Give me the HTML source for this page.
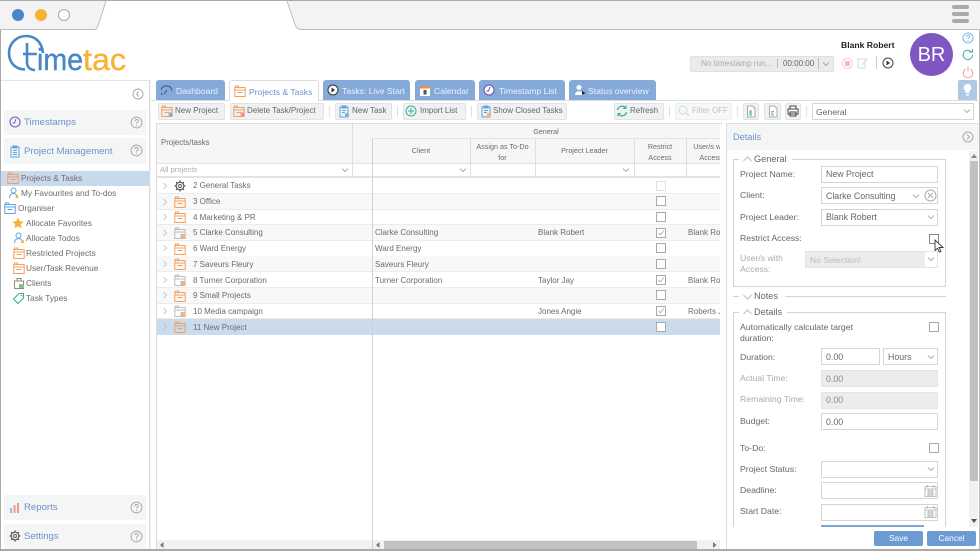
<!DOCTYPE html>
<html><head><meta charset="utf-8"><title>TimeTac</title>
<style>
html,body{margin:0;padding:0;background:#fff;width:980px;height:551px;overflow:hidden}
#w{position:relative;width:980px;height:551px;overflow:hidden;font-family:"Liberation Sans",sans-serif;color:#666;filter:blur(.35px)}
#w div,#w span,#w svg{position:absolute;box-sizing:border-box}
.t{white-space:nowrap;height:16px;line-height:16px;font-size:8px}
.tab{top:80px;height:20px;background:#85aad9;border-radius:3px 3px 0 0}
.tl{top:83px;color:#eaf1fa;font-size:8.6px}
.btn{top:103px;height:17px;background:#f0f1f1;border:1px solid #e2e3e3;border-radius:2px}
.bl{top:103px;font-size:8px;color:#666}
.nav{left:4px;width:142px;background:#f4f5f5}
.navt{left:24px;font-size:9.6px;color:#6f8fcb}
.li{font-size:8.3px;color:#6b6b6b}
.row{left:157px;width:563px;height:16px;border-bottom:1px solid #ececec}
.cb{width:10px;height:10px;background:#fff;border:1px solid #a9a9a9}
.h{background:#e3e3e3}
.v{background:#dedede}
.ct{font-size:8px;color:#6b6b6b}
.hd{font-size:7.2px;color:#6b6b6b;text-align:center;line-height:11px;white-space:nowrap;height:auto}
.lb{left:740px;font-size:8.7px;color:#666}
.ds{color:#aaa}
.in{left:821px;width:117px;height:17px;background:#fff;border:1px solid #d5d5d5}
.it{left:826px;font-size:8.8px;color:#666}
.dis{background:#ececec;border-color:#e4e4e4}
.fs{left:733px;width:213px;border:1px solid #d4d4d4}
.leg{background:#fff;height:12px}
.ic{overflow:visible}
</style></head><body><div id="w">

<svg width="0" height="0" style="position:absolute">
<symbol id="fo" viewBox="0 0 12 12"><path d="M1.500 3V1h3v1.500M.8 2.500h10.400v9H.8zM.8 5h10.400M3.500 7.500h5" fill="none" stroke="#f4a05c" stroke-width="1"/></symbol>
<symbol id="fg" viewBox="0 0 12 12"><path d="M1.500 3V1h3v1.500M.8 2.500h10.400v9H.8zM.8 5h10.400" fill="none" stroke="#bdbdbd" stroke-width="1"/><rect x="6.500" y="7" width="4.500" height="4.500" fill="#f4b27c"/></symbol>
<symbol id="gear" viewBox="0 0 12 12"><circle cx="6" cy="6" r="3.800" fill="none" stroke="#555" stroke-width="1.100"/><circle cx="6" cy="6" r="1.500" fill="none" stroke="#555" stroke-width=".9"/><path d="M6 .5v1.800M6 9.700v1.800M.5 6h1.800M9.700 6h1.800M2.100 2.100l1.300 1.300M8.600 8.600l1.300 1.300M2.100 9.900l1.300-1.300M8.600 3.400l1.300-1.300" stroke="#555" stroke-width="1.300"/></symbol>
<symbol id="q" viewBox="0 0 12 12"><circle cx="6" cy="6" r="5" fill="none" stroke="#aaa" stroke-width=".9"/><path d="M4.500 4.700c0-2 3.200-2 3.200-.1 0 1.200-1.700 1.200-1.700 2.600M6 8.200v1" fill="none" stroke="#aaa" stroke-width=".9"/></symbol>
<symbol id="ch" viewBox="0 0 8 6"><path d="M1 1.500l3 3 3-3" fill="none" stroke="#999" stroke-width=".8"/></symbol>
<symbol id="cr" viewBox="0 0 6 8"><path d="M1.500 1l3 3-3 3" fill="none" stroke="#bbb" stroke-width=".8"/></symbol>
<symbol id="cal" viewBox="0 0 13 13"><path d="M1 2.500h11v10H1zM1 5h11M3.500 1v2.500M9.500 1v2.500M3 7h7M3 9h7M3 11h7M5 5v7M8 5v7" fill="none" stroke="#b0b0b0" stroke-width=".8"/></symbol>
<symbol id="tick" viewBox="0 0 10 10"><path d="M2 5l2.300 2.300L8.500 1.800" fill="none" stroke="#999" stroke-width=".9"/></symbol>
</svg>

<!-- browser chrome -->
<div style="left:0;top:0;width:980px;height:30px;background:#f3f3f3;border-top:1px solid #aaa;border-bottom:1px solid #bdbdbd"></div>
<svg style="left:90px;top:0" width="220" height="31"><path d="M0 30h3c3 0 4-1 5-4L16 1H197l8 24c1 3 3 5 7 5h8v1H0z" fill="#fff"/><path d="M0 29.500h3c3 0 4-1 5-4L16 1M197 1l8 23.500c1 3 3 5 7 5h8" fill="none" stroke="#bbb"/></svg>
<div style="left:12px;top:9px;width:12px;height:12px;border-radius:50%;background:#4a86c8"></div>
<div style="left:35px;top:9px;width:12px;height:12px;border-radius:50%;background:#f5b335"></div>
<div style="left:58px;top:9px;width:12px;height:12px;border-radius:50%;background:#fff;border:1px solid #aaa"></div>
<div style="left:952px;top:5px;width:17px;height:4px;background:#aaa;border-radius:2px"></div>
<div style="left:952px;top:12px;width:17px;height:4px;background:#aaa;border-radius:2px"></div>
<div style="left:952px;top:19px;width:17px;height:4px;background:#aaa;border-radius:2px"></div>
<div style="left:0;top:30px;width:1px;height:521px;background:#aaa"></div>
<div style="left:979px;top:30px;width:1px;height:521px;background:#bbb"></div>
<div style="left:0;top:549px;width:980px;height:2px;background:#aaa"></div>

<!-- logo -->
<svg style="left:5px;top:32px" width="125" height="44">
<path d="M20 37.500C10 37.500 4 30 4 21 4 11 12 4 21 4c9 0 16 6 17 17" fill="none" stroke="#4a86c8" stroke-width="2.600"/>
<path d="M22 11v19c0 5 3 8 8 8M18 22h14" fill="none" stroke="#4a86c8" stroke-width="2.600"/>
<text x="32" y="38" font-family="Liberation Sans" font-size="31" textLength="46" lengthAdjust="spacingAndGlyphs" fill="#4a86c8" stroke="#4a86c8" stroke-width=".4">ime</text>
<text x="78" y="38" font-family="Liberation Sans" font-size="31" textLength="43" lengthAdjust="spacingAndGlyphs" fill="#f8b133" stroke="#f8b133" stroke-width=".4">tac</text>
</svg>

<!-- timer and user -->
<div style="left:690px;top:56px;width:144px;height:16px;background:#ebebeb;border:1px solid #e0e0e0;border-radius:2px"></div>
<div class="t ds" style="left:701px;top:56px;font-size:8.200px">No timestamp run...</div>
<div style="left:777px;top:59px;width:1px;height:9px;background:#bbb"></div>
<div class="t" style="left:783px;top:56px;font-size:8px;color:#666">00:00:00</div>
<div style="left:818px;top:58px;width:1px;height:11px;background:#bbb"></div>
<svg class="ic" style="left:822px;top:61px" width="8" height="6"><use href="#ch"/></svg>
<svg style="left:841px;top:57px" width="13" height="13"><circle cx="6.500" cy="6.500" r="5" fill="none" stroke="#f9caca"/><rect x="4" y="4" width="5" height="5" fill="#f7baba"/></svg>
<svg style="left:856px;top:56px" width="13" height="14"><path d="M2 3h7v9H2z" fill="none" stroke="#c7ddf0"/><path d="M6 8l5-6 1 1-5 6z" fill="#f9dfae"/></svg>
<div style="left:876px;top:56px;width:1px;height:13px;background:#ccc"></div>
<svg style="left:882px;top:57px" width="12" height="12"><circle cx="6" cy="6" r="5" fill="none" stroke="#444"/><path d="M4.500 3.500l3.500 2.500-3.500 2.500z" fill="#333"/></svg>
<div class="t" style="left:841px;top:37px;font-size:8.600px;font-weight:bold;color:#222">Blank Robert</div>
<div style="left:910px;top:33px;width:43px;height:43px;border-radius:50%;background:#7e57c2"></div>
<div class="t" style="left:910px;top:47px;width:43px;text-align:center;font-size:20px;color:#fff">BR</div>
<svg style="left:962px;top:32px" width="12" height="12"><circle cx="6" cy="6" r="5" fill="none" stroke="#7db7e8"/><path d="M4.500 4.700c0-2 3.200-2 3.200-.1 0 1.200-1.700 1.200-1.700 2.600M6 8.200v1" fill="none" stroke="#7db7e8"/></svg>
<svg style="left:962px;top:49px" width="12" height="12"><path d="M10.500 6a4.700 4.700 0 1 1-1.500-3.500" fill="none" stroke="#3fae9b" stroke-width="1"/><path d="M7 3h3.500V0" fill="none" stroke="#3fae9b"/></svg>
<svg style="left:962px;top:66px" width="12" height="12"><path d="M3.500 3a4.700 4.700 0 1 0 5 0M6 .5v5" fill="none" stroke="#f29a9a" stroke-width="1"/></svg>
<div style="left:958px;top:80px;width:19px;height:20px;background:#aec8e6;border-radius:2px 2px 0 0"></div>
<svg style="left:962px;top:83px" width="11" height="14"><path d="M5.500 1a3.800 3.800 0 0 1 2 7v2h-4V8a3.800 3.800 0 0 1 2-7zM4 11h3v1.500H4z" fill="#fff"/></svg>

<!-- sidebar -->
<div style="left:1px;top:80px;width:149px;height:469px;background:#fff;border-top:1px solid #e4e4e4;border-right:1px solid #dcdcdc"></div>
<div style="left:150px;top:80px;width:1px;height:469px;background:#f2f2f2"></div>
<svg style="left:132px;top:88px" width="12" height="12"><circle cx="6" cy="6" r="5" fill="none" stroke="#aaa"/><path d="M7 3.500L4.500 6 7 8.500" fill="none" stroke="#aaa"/></svg>
<div class="nav" style="top:110px;height:25px"></div>
<svg style="left:9px;top:116px" width="12" height="12"><circle cx="6" cy="6" r="5" fill="none" stroke="#7e57c2" stroke-width="1.100"/><path d="M7 3L5.500 7H3.500" fill="none" stroke="#7e57c2"/></svg>
<div class="t navt" style="top:115px">Timestamps</div>
<svg style="left:130px;top:116px" width="13" height="13"><use href="#q"/></svg>
<div class="nav" style="top:138px;height:26px"></div>
<svg style="left:9px;top:145px" width="12" height="13"><path d="M2 2h8v10H2zM4 1h4v2H4zM4 5.500h4M4 7.500h4M4 9.500h4" fill="none" stroke="#5fa4dc"/></svg>
<div class="t navt" style="top:144px">Project Management</div>
<svg style="left:130px;top:144px" width="13" height="13"><use href="#q"/></svg>

<div style="left:1px;top:171px;width:148px;height:15px;background:#c9d9ec"></div>
<svg style="left:7px;top:172px" width="12" height="12"><use href="#fo"/></svg>
<div class="t li" style="left:21px;top:170px">Projects &amp; Tasks</div>
<svg style="left:8px;top:187px" width="12" height="12"><circle cx="5.500" cy="3.500" r="2.500" fill="none" stroke="#5fa4dc"/><path d="M1.500 11c0-6 8-6 8 0" fill="none" stroke="#5fa4dc"/><path d="M9 7.500l1 1.500h1.500L10 10l.5 1.500L9 11l-1.500.5L8 10 7 9h1z" fill="#f5b335"/></svg>
<div class="t li" style="left:21px;top:185px">My Favourites and To-dos</div>
<svg style="left:4px;top:202px" width="12" height="12"><path d="M1.500 3V1h3v1.500M.8 2.500h10.400v9H.8zM.8 5h10.400M3.500 7.500h5" fill="none" stroke="#5fa4dc"/></svg>
<div class="t li" style="left:18px;top:200px">Organiser</div>
<svg style="left:12px;top:217px" width="12" height="12"><path d="M6 .5l1.700 3.700 4 .4-3 2.700.9 4L6 9.300 2.400 11.300l.9-4-3-2.700 4-.4z" fill="#f5b335"/></svg>
<div class="t li" style="left:26px;top:215px">Allocate Favorites</div>
<svg style="left:13px;top:232px" width="12" height="12"><circle cx="5.500" cy="3.500" r="2.500" fill="none" stroke="#5fa4dc"/><path d="M1.500 11c0-6 8-6 8 0" fill="none" stroke="#5fa4dc"/><path d="M8 8l3 3M11 8l-3 3" stroke="#f5b335"/></svg>
<div class="t li" style="left:26px;top:230px">Allocate Todos</div>
<svg style="left:13px;top:247px" width="12" height="12"><use href="#fo"/></svg>
<div class="t li" style="left:26px;top:245px">Restricted Projects</div>
<svg style="left:13px;top:262px" width="12" height="12"><use href="#fo"/></svg>
<div class="t li" style="left:26px;top:260px">User/Task Revenue</div>
<svg style="left:13px;top:277px" width="12" height="12"><path d="M1.500 4h9v7.500h-9zM4 4V1.500h4V4" fill="none" stroke="#9a8a7a"/><rect x="6" y="7" width="5" height="4" fill="#8dbf8d"/></svg>
<div class="t li" style="left:26px;top:275px">Clients</div>
<svg style="left:13px;top:292px" width="12" height="12"><path d="M.5 7L6 1.500h4.500V6L5 11.500z" fill="none" stroke="#3fae9b" stroke-width="1.100"/><circle cx="8.500" cy="3.500" r=".9" fill="#3fae9b"/></svg>
<div class="t li" style="left:26px;top:290px">Task Types</div>

<div class="nav" style="top:495px;height:25px"></div>
<svg style="left:9px;top:502px" width="12" height="12"><path d="M1 6h2v5H1z" fill="#8fc1ea"/><path d="M4.500 3h2v8h-2z" fill="#f59a8e"/><path d="M8 1h2v10H8z" fill="#f59a8e"/></svg>
<div class="t navt" style="top:500px">Reports</div>
<svg style="left:130px;top:501px" width="13" height="13"><use href="#q"/></svg>
<div class="nav" style="top:524px;height:25px"></div>
<svg style="left:9px;top:530px" width="12" height="12"><use href="#gear"/></svg>
<div class="t navt" style="top:529px">Settings</div>
<svg style="left:130px;top:530px" width="13" height="13"><use href="#q"/></svg>

<!-- tabs -->
<div class="tab" style="left:156px;width:69px"></div>
<svg style="left:161px;top:84px" width="12" height="12"><path d="M1 11a5.500 5.500 0 0 1 5-9c3 0 5 2.500 5 5M3 10l3-4" fill="none" stroke="#38506e"/></svg>
<div class="t tl" style="left:176px">Dashboard</div>
<div style="left:229px;top:80px;width:90px;height:21px;background:#fff;border:1px solid #dcdcdc;border-bottom:none;border-radius:3px 3px 0 0"></div>
<svg style="left:234px;top:85px" width="12" height="12"><use href="#fo"/></svg>
<div class="t tl" style="left:249px;top:84px;color:#6f8fcb">Projects &amp; Tasks</div>
<div class="tab" style="left:323px;width:87px"></div>
<svg style="left:327px;top:84px" width="12" height="12"><circle cx="6" cy="6" r="5" fill="#fff" stroke="#333"/><path d="M4.500 3.500l3.500 2.500-3.500 2.500z" fill="#333"/></svg>
<div class="t tl" style="left:342px">Tasks: Live Start</div>
<div class="tab" style="left:415px;width:60px"></div>
<svg style="left:419px;top:85px" width="12" height="12"><rect x="1" y="1" width="10" height="10" fill="#fff"/><rect x="1" y="1" width="10" height="2.500" fill="#f08a4b"/><rect x="4.500" y="5" width="3" height="4.500" fill="#555"/></svg>
<div class="t tl" style="left:434px">Calendar</div>
<div class="tab" style="left:479px;width:86px"></div>
<svg style="left:483px;top:84px" width="12" height="12"><circle cx="6" cy="6" r="5" fill="#fff" stroke="#6a4fb0"/><path d="M7 3L5.500 7H3.500" fill="none" stroke="#6a4fb0"/></svg>
<div class="t tl" style="left:499px">Timestamp List</div>
<div class="tab" style="left:569px;width:87px"></div>
<svg style="left:574px;top:84px" width="12" height="13"><circle cx="5" cy="3.500" r="2.500" fill="#fff"/><path d="M1 11c0-5 8-5 8 0z" fill="#fff"/><path d="M8 7l3.500 2L8 11z" fill="#222"/></svg>
<div class="t tl" style="left:588px">Status overview</div>
<div style="left:151px;top:100px;width:78px;height:1px;background:#dcdcdc"></div>
<div style="left:319px;top:100px;width:661px;height:1px;background:#dcdcdc"></div>

<!-- toolbar -->
<div class="btn" style="left:158px;width:67px"></div>
<svg style="left:161px;top:105px" width="12" height="12"><use href="#fo"/><circle cx="9.500" cy="9.500" r="2" fill="#67bdc2"/></svg>
<div class="t bl" style="left:175px">New Project</div>
<div class="btn" style="left:230px;width:94px"></div>
<svg style="left:233px;top:105px" width="12" height="12"><use href="#fo"/><circle cx="9.500" cy="9.500" r="2" fill="#f0907e"/></svg>
<div class="t bl" style="left:247px">Delete Task/Project</div>
<div class="v" style="left:329px;top:106px;width:1px;height:11px"></div>
<div class="btn" style="left:335px;width:57px"></div>
<svg style="left:338px;top:105px" width="12" height="13"><path d="M2 2h8v10H2zM4 1h4v2H4zM4 5.500h4M4 7.500h3" fill="none" stroke="#5fa4dc"/><circle cx="9" cy="10" r="2" fill="#67bdc2"/></svg>
<div class="t bl" style="left:352px">New Task</div>
<div class="v" style="left:397px;top:106px;width:1px;height:11px"></div>
<div class="btn" style="left:403px;width:63px"></div>
<svg style="left:405px;top:105px" width="12" height="12"><circle cx="6" cy="6" r="5" fill="none" stroke="#3fae9b"/><path d="M6 3v6M3 6h6" stroke="#3fae9b"/></svg>
<div class="t bl" style="left:420px">Import List</div>
<div class="v" style="left:471px;top:106px;width:1px;height:11px"></div>
<div class="btn" style="left:477px;width:90px"></div>
<svg style="left:480px;top:105px" width="12" height="13"><path d="M2 2h8v10H2zM4 1h4v2H4zM4 5.500h4M4 7.500h3" fill="none" stroke="#5fa4dc"/><rect x="7" y="8" width="4" height="4" fill="#f4b27c"/></svg>
<div class="t bl" style="left:493px">Show Closed Tasks</div>
<div class="btn" style="left:614px;width:50px"></div>
<svg style="left:616px;top:105px" width="12" height="12"><path d="M1.500 5a4.500 4.500 0 0 1 8-2M10.500 7a4.500 4.500 0 0 1-8 2" fill="none" stroke="#3fae9b" stroke-width="1.300"/><path d="M10 .5v3H7M2 11.500v-3h3" fill="none" stroke="#3fae9b"/></svg>
<div class="t bl" style="left:630px">Refresh</div>
<div class="v" style="left:669px;top:106px;width:1px;height:11px"></div>
<div class="btn" style="left:675px;width:57px;background:#f8f8f8;border-color:#eee"></div>
<svg style="left:678px;top:105px" width="12" height="12"><circle cx="5" cy="5" r="4" fill="none" stroke="#bcdcf0"/><path d="M8 8l3 3" stroke="#bcdcf0"/></svg>
<div class="t bl ds" style="left:692px;color:#c0c0c0">Filter OFF</div>
<div class="v" style="left:737px;top:106px;width:1px;height:11px"></div>
<div class="btn" style="left:743px;width:16px"></div>
<svg style="left:746px;top:105px" width="10" height="13"><path d="M1.500 1h5l2.500 2.500V12h-7.500z" fill="#fff" stroke="#aaa"/><path d="M6 6H4v4h2M4 8h2" fill="none" stroke="#3fae9b"/></svg>
<div class="btn" style="left:764px;width:17px"></div>
<svg style="left:768px;top:105px" width="10" height="13"><path d="M1.500 1h5l2.500 2.500V12h-7.500z" fill="#fff" stroke="#aaa"/><path d="M6 6.500H4v3.500h2" fill="none" stroke="#5fa4dc"/></svg>
<div class="btn" style="left:785px;width:16px"></div>
<svg style="left:787px;top:105px" width="12" height="12"><path d="M3 4V1h6v3M1 4h10v5H1zM3 7h6v4H3z" fill="#fff" stroke="#444"/></svg>
<div class="v" style="left:806px;top:106px;width:1px;height:11px"></div>
<div style="left:812px;top:103px;width:162px;height:17px;background:#fff;border:1px solid #d5d5d5"></div>
<div class="t" style="left:816px;top:104px;font-size:8.600px">General</div>
<svg style="left:963px;top:108px" width="8" height="6"><use href="#ch"/></svg>

<!-- grid -->
<div style="left:156px;top:123px;width:566px;height:426px;background:#fff;border-top:1px solid #ddd;border-left:1px solid #ddd"></div>
<div style="left:157px;top:124px;width:563px;height:53px;background:#f6f6f6"></div>
<div class="v" style="left:352px;top:124px;width:1px;height:39px"></div>
<div class="h" style="left:372px;top:138px;width:348px;height:1px"></div>
<div class="h" style="left:157px;top:163px;width:563px;height:1px"></div>
<div class="h" style="left:157px;top:176px;width:563px;height:2px"></div>
<div class="t ct" style="left:161px;top:135px;font-size:7.800px">Projects/tasks</div>
<div class="t hd" style="left:372px;top:124px;width:348px;line-height:16px;height:14px">General</div>
<div class="t hd" style="left:372px;top:145px;width:98px">Client</div>
<div class="t hd" style="left:470px;top:141px;width:65px">Assign as To-Do<br>for</div>
<div class="t hd" style="left:535px;top:145px;width:99px">Project Leader</div>
<div class="t hd" style="left:634px;top:141px;width:52px">Restrict<br>Access</div>
<div class="t hd" style="left:686px;top:141px;width:34px;overflow:hidden"><span style="position:relative;display:block;width:50px;text-align:center">User/s with<br>Access</span></div>
<div style="left:157px;top:164px;width:563px;height:12px;background:#fff"></div>
<div class="t ct" style="left:160px;top:162px;color:#aaa;font-size:7.600px">All projects</div>
<svg style="left:341px;top:167px" width="8" height="6"><use href="#ch"/></svg>
<svg style="left:459px;top:167px" width="8" height="6"><use href="#ch"/></svg>
<svg style="left:622px;top:167px" width="8" height="6"><use href="#ch"/></svg>
<div class="v" style="left:352px;top:164px;width:1px;height:12px"></div>
<div class="v" style="left:470px;top:139px;width:1px;height:37px"></div>
<div class="v" style="left:535px;top:139px;width:1px;height:37px"></div>
<div class="v" style="left:634px;top:139px;width:1px;height:37px"></div>
<div class="v" style="left:686px;top:139px;width:1px;height:37px"></div>

<!-- rows -->
<div class="row" style="top:178px"></div>
<div class="row" style="top:194px;background:#f8f8f8"></div>
<div class="row" style="top:209px"></div>
<div class="row" style="top:225px;background:#f8f8f8"></div>
<div class="row" style="top:241px"></div>
<div class="row" style="top:256px;background:#f8f8f8"></div>
<div class="row" style="top:272px"></div>
<div class="row" style="top:288px;background:#f8f8f8"></div>
<div class="row" style="top:303px"></div>
<div class="row" style="top:319px;background:#cbdbee;height:16px;border:none"></div>
<div class="v" style="left:372px;top:139px;width:1px;height:410px;background:#d0d0d0"></div>

<svg style="left:162px;top:182px" width="6" height="8"><use href="#cr"/></svg>
<svg style="left:162px;top:198px" width="6" height="8"><use href="#cr"/></svg>
<svg style="left:162px;top:213px" width="6" height="8"><use href="#cr"/></svg>
<svg style="left:162px;top:229px" width="6" height="8"><use href="#cr"/></svg>
<svg style="left:162px;top:244px" width="6" height="8"><use href="#cr"/></svg>
<svg style="left:162px;top:260px" width="6" height="8"><use href="#cr"/></svg>
<svg style="left:162px;top:276px" width="6" height="8"><use href="#cr"/></svg>
<svg style="left:162px;top:291px" width="6" height="8"><use href="#cr"/></svg>
<svg style="left:162px;top:307px" width="6" height="8"><use href="#cr"/></svg>
<svg style="left:162px;top:323px" width="6" height="8"><use href="#cr"/></svg>

<svg style="left:174px;top:180px" width="12" height="12"><use href="#gear"/></svg>
<svg style="left:174px;top:196px" width="12" height="12"><use href="#fo"/></svg>
<svg style="left:174px;top:211px" width="12" height="12"><use href="#fo"/></svg>
<svg style="left:174px;top:227px" width="12" height="12"><use href="#fg"/></svg>
<svg style="left:174px;top:243px" width="12" height="12"><use href="#fo"/></svg>
<svg style="left:174px;top:258px" width="12" height="12"><use href="#fo"/></svg>
<svg style="left:174px;top:274px" width="12" height="12"><use href="#fg"/></svg>
<svg style="left:174px;top:290px" width="12" height="12"><use href="#fo"/></svg>
<svg style="left:174px;top:305px" width="12" height="12"><use href="#fg"/></svg>
<svg style="left:174px;top:321px" width="12" height="12"><use href="#fo"/></svg>

<div class="t ct" style="left:193px;top:178px">2 General Tasks</div>
<div class="t ct" style="left:193px;top:194px">3 Office</div>
<div class="t ct" style="left:193px;top:210px">4 Marketing &amp; PR</div>
<div class="t ct" style="left:193px;top:225px">5 Clarke Consulting</div>
<div class="t ct" style="left:193px;top:241px">6 Ward Energy</div>
<div class="t ct" style="left:193px;top:257px">7 Saveurs Fleury</div>
<div class="t ct" style="left:193px;top:273px">8 Turner Corporation</div>
<div class="t ct" style="left:193px;top:288px">9 Small Projects</div>
<div class="t ct" style="left:193px;top:304px">10 Media campaign</div>
<div class="t ct" style="left:193px;top:320px">11 New Project</div>

<div class="t ct" style="left:375px;top:225px">Clarke Consulting</div>
<div class="t ct" style="left:375px;top:241px">Ward Energy</div>
<div class="t ct" style="left:375px;top:257px">Saveurs Fleury</div>
<div class="t ct" style="left:375px;top:273px">Turner Corporation</div>
<div class="t ct" style="left:538px;top:225px">Blank Robert</div>
<div class="t ct" style="left:538px;top:273px">Taylor Jay</div>
<div class="t ct" style="left:538px;top:304px">Jones Angie</div>
<div class="t ct" style="left:688px;top:225px;width:32px;overflow:hidden">Blank Robert</div>
<div class="t ct" style="left:688px;top:273px;width:32px;overflow:hidden">Blank Robert</div>
<div class="t ct" style="left:688px;top:304px;width:32px;overflow:hidden">Roberts Jim</div>

<div class="cb" style="left:656px;top:181px;border-color:#e2e2e2"></div>
<div class="cb" style="left:656px;top:196px"></div>
<div class="cb" style="left:656px;top:212px"></div>
<div class="cb" style="left:656px;top:228px"><svg style="left:0;top:0" width="8" height="8"><use href="#tick"/></svg></div>
<div class="cb" style="left:656px;top:243px"></div>
<div class="cb" style="left:656px;top:259px"></div>
<div class="cb" style="left:656px;top:275px"><svg style="left:0;top:0" width="8" height="8"><use href="#tick"/></svg></div>
<div class="cb" style="left:656px;top:290px"></div>
<div class="cb" style="left:656px;top:306px"><svg style="left:0;top:0" width="8" height="8"><use href="#tick"/></svg></div>
<div class="cb" style="left:656px;top:322px"></div>

<!-- grid scrollbars -->
<div style="left:157px;top:540px;width:563px;height:9px;background:#f1f1f1"></div>
<div class="v" style="left:372px;top:540px;width:1px;height:9px;background:#d0d0d0"></div>
<svg style="left:160px;top:542px" width="4" height="6"><path d="M3.500 0v6L0 3z" fill="#777"/></svg>
<svg style="left:376px;top:542px" width="4" height="6"><path d="M3.500 0v6L0 3z" fill="#777"/></svg>
<svg style="left:713px;top:542px" width="4" height="6"><path d="M0 0v6l3.500-3z" fill="#777"/></svg>
<div style="left:384px;top:541px;width:313px;height:8px;background:#c1c1c1"></div>

<!-- details -->
<div style="left:726px;top:123px;width:253px;height:426px;background:#fff;border-top:1px solid #ddd;border-left:1px solid #ddd"></div>
<div style="left:727px;top:124px;width:252px;height:26px;background:#f4f5f5"></div>
<div class="t" style="left:733px;top:129px;font-size:9.200px;color:#6f8fcb">Details</div>
<svg style="left:962px;top:131px" width="12" height="12"><circle cx="6" cy="6" r="5" fill="none" stroke="#aaa"/><path d="M5 3.500L7.500 6 5 8.500" fill="none" stroke="#aaa"/></svg>
<div style="left:969px;top:151px;width:9px;height:376px;background:#f1f1f1"></div>
<div style="left:970px;top:161px;width:8px;height:320px;background:#c1c1c1"></div>
<svg style="left:971px;top:154px" width="6" height="4"><path d="M0 4h6L3 0z" fill="#888"/></svg>
<svg style="left:971px;top:519px" width="6" height="4"><path d="M0 0h6L3 4z" fill="#555"/></svg>

<div class="fs" style="top:159px;height:128px"></div>
<div class="leg" style="left:739px;top:153px;width:53px"></div>
<svg style="left:743px;top:156px" width="9" height="6"><path d="M.5 5l4-4 4 4" fill="none" stroke="#aaa" stroke-width=".8"/></svg>
<div class="t" style="left:754px;top:151px;font-size:9.200px">General</div>

<div class="t lb" style="left:740px;top:166px">Project Name:</div>
<div class="in" style="top:166px"></div><div class="t it" style="top:166px">New Project</div>
<div class="t lb" style="top:187px">Client:</div>
<div class="in" style="top:187px"></div><div class="t it" style="top:188px">Clarke Consulting</div>
<svg style="left:912px;top:193px" width="8" height="6"><use href="#ch"/></svg>
<svg style="left:924px;top:189px" width="13" height="13"><circle cx="6.500" cy="6.500" r="5.500" fill="none" stroke="#aaa"/><path d="M4 4l5 5M9 4l-5 5" stroke="#aaa" stroke-width=".9"/></svg>
<div class="t lb" style="top:209px">Project Leader:</div>
<div class="in" style="top:209px"></div><div class="t it" style="top:209px">Blank Robert</div>
<svg style="left:927px;top:214px" width="8" height="6"><use href="#ch"/></svg>
<div class="t lb" style="top:230px">Restrict Access:</div>
<div class="cb" style="left:929px;top:234px;border-color:#888"></div>
<svg style="left:934px;top:239px" width="10" height="15"><path d="M1 1v10.500l2.500-2.300 1.800 4 1.700-.8-1.800-3.900H9z" fill="#fff" stroke="#333" stroke-width=".9"/></svg>
<div class="t lb ds" style="line-height:11px;height:24px;white-space:normal;width:60px;color:#aaa;top:253px">User/s with Access:</div>
<div class="in dis" style="left:805px;width:133px;top:251px"></div>
<div style="left:925px;top:252px;width:12px;height:15px;background:#fff"></div>
<div class="t" style="left:810px;top:252px;font-size:8.600px;color:#bbb">No Selection!</div>
<svg style="left:927px;top:256px" width="8" height="6"><use href="#ch"/></svg>

<div class="h" style="left:733px;top:296px;width:213px;height:1px;background:#d4d4d4"></div>
<div class="leg" style="left:739px;top:290px;width:46px"></div>
<svg style="left:743px;top:294px" width="9" height="6"><path d="M.5 1l4 4 4-4" fill="none" stroke="#aaa" stroke-width=".8"/></svg>
<div class="t" style="left:754px;top:288px;font-size:9.200px">Notes</div>

<div class="fs" style="top:312px;height:240px;border-bottom:none"></div>
<div class="leg" style="left:739px;top:306px;width:48px"></div>
<svg style="left:743px;top:309px" width="9" height="6"><path d="M.5 5l4-4 4 4" fill="none" stroke="#aaa" stroke-width=".8"/></svg>
<div class="t" style="left:754px;top:304px;font-size:9.200px">Details</div>

<div class="t lb" style="top:319px">Automatically calculate target</div>
<div class="t lb" style="top:330px">duration:</div>
<div class="cb" style="left:929px;top:322px"></div>
<div class="t lb" style="top:349px">Duration:</div>
<div class="in" style="top:348px;width:59px"></div><div class="t it" style="top:349px">0.00</div>
<div class="in" style="left:883px;width:55px;top:348px"></div><div class="t it" style="left:888px;top:349px">Hours</div>
<svg style="left:927px;top:354px" width="8" height="6"><use href="#ch"/></svg>
<div class="t lb ds" style="top:370px;color:#aaa">Actual Time:</div>
<div class="in dis" style="top:370px"></div><div class="t it" style="top:371px;color:#888">0.00</div>
<div class="t lb ds" style="top:391px;color:#aaa">Remaining Time:</div>
<div class="in dis" style="top:392px"></div><div class="t it" style="top:392px;color:#888">0.00</div>
<div class="t lb" style="top:413px">Budget:</div>
<div class="in" style="top:413px"></div><div class="t it" style="top:414px">0.00</div>
<div class="t lb" style="top:440px">To-Do:</div>
<div class="cb" style="left:929px;top:443px"></div>
<div class="t lb" style="top:461px">Project Status:</div>
<div class="in" style="top:461px"></div>
<svg style="left:927px;top:466px" width="8" height="6"><use href="#ch"/></svg>
<div class="t lb" style="top:482px">Deadline:</div>
<div class="in" style="top:482px"></div>
<svg style="left:924px;top:484px" width="13" height="13"><use href="#cal"/></svg>
<div class="t lb" style="top:503px">Start Date:</div>
<div class="in" style="top:504px"></div>
<svg style="left:924px;top:505px" width="13" height="13"><use href="#cal"/></svg>
<div style="left:821px;top:525px;width:103px;height:2px;background:#7aa5d6"></div>

<div style="left:727px;top:527px;width:252px;height:22px;background:#fff"></div>
<div style="left:874px;top:531px;width:49px;height:15px;background:#6b9bd2;border-radius:2px"></div>
<div class="t" style="left:874px;top:530px;width:49px;text-align:center;font-size:8.400px;color:#fff">Save</div>
<div style="left:927px;top:531px;width:49px;height:15px;background:#6b9bd2;border-radius:2px"></div>
<div class="t" style="left:927px;top:530px;width:49px;text-align:center;font-size:8.400px;color:#fff">Cancel</div>
<div style="left:0;top:549px;width:980px;height:2px;background:#aaa"></div>
</div></body></html>
